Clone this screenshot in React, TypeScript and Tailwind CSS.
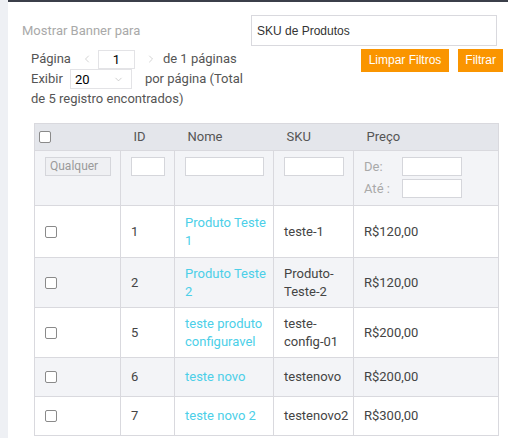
import { ChevronDown, ChevronLeft, ChevronRight } from 'lucide-react'

type Row = { id: string; nome: string; sku: string; preco: string; h: string; bg: string }

const rows: Row[] = [
  { id: '1', nome: 'Produto Teste 1', sku: 'teste-1', preco: 'R$120,00', h: 'h-[52px]', bg: 'bg-white' },
  { id: '2', nome: 'Produto Teste 2', sku: 'Produto-Teste-2', preco: 'R$120,00', h: 'h-[50px]', bg: 'bg-[#f3f4f7]' },
  { id: '5', nome: 'teste produto configuravel', sku: 'teste-config-01', preco: 'R$200,00', h: 'h-[50px]', bg: 'bg-white' },
  { id: '6', nome: 'teste novo', sku: 'testenovo', preco: 'R$200,00', h: 'h-[39px]', bg: 'bg-[#f3f4f7]' },
  { id: '7', nome: 'teste novo 2', sku: 'testenovo2', preco: 'R$300,00', h: 'h-[39px]', bg: 'bg-white' },
]

function Box() {
  return <span className="block w-[12px] h-[12px] rounded-[2px] border border-[#8a8a8a] bg-white" />
}

function FilterInput({ w }: { w: string }) {
  return <div className={`${w} h-[19px] border border-[#d5d6db] bg-white`} />
}

export default function App() {
  return (
    <div className="flex min-h-screen bg-[#eef0f4] font-['Roboto',sans-serif] text-[13px] text-[#555]">
      <div className="w-[8px] shrink-0 bg-[#eef0f4]" />
      <div className="flex-1 bg-white border-t-2 border-[#3b3f4a] pt-[13px]">
        <div className="flex">
          <div className="w-[243px] pl-[14px] pt-[6px] text-[#a9a9a9]">Mostrar Banner para</div>
          <div className="w-[246px] h-[31px] border border-[#d9d9de] flex items-center pl-[5px] font-['Liberation_Sans',Arial,sans-serif] text-[12px] text-[#333]">
            SKU de Produtos
          </div>
        </div>
        <div className="flex justify-between">
          <div className="ml-[23px] mt-[3px] w-[215px] leading-[20px]">
            <div className="flex items-center h-[20px]">
              <span>Página</span>
              <ChevronLeft className="w-[12px] h-[12px] ml-[10px] text-[#c4c4c4]" strokeWidth={1.5} />
              <div className="ml-[5px] w-[37px] h-[19px] border border-[#e3e3e6] flex items-center justify-center text-black leading-none">1</div>
              <ChevronRight className="w-[12px] h-[12px] ml-[10px] text-[#c4c4c4]" strokeWidth={1.5} />
              <span className="ml-[6px]">de 1 páginas</span>
            </div>
            <div className="flex items-center h-[20px]">
              <span>Exibir</span>
              <div className="ml-[7px] w-[62px] h-[20px] border border-[#e3e3e6] flex items-center justify-between pl-[4px] pr-[7px] text-black leading-none">
                <span>20</span>
                <ChevronDown className="w-[11px] h-[11px] text-[#bbb]" strokeWidth={1.5} />
              </div>
              <span className="ml-[13px] whitespace-nowrap">por página (Total</span>
            </div>
            <div>de 5 registro encontrados)</div>
          </div>
          <div className="flex gap-[9px] mt-[3px] mr-[5px] h-[23px] font-['Liberation_Sans',Arial,sans-serif] text-[12px] text-white">
            <button className="bg-[#fa9500] px-[8px] leading-[23px]">Limpar Filtros</button>
            <button className="bg-[#fa9500] px-[7px] leading-[23px]">Filtrar</button>
          </div>
        </div>
        <table className="ml-[26px] mt-[14px] w-[464px] table-fixed border-collapse border border-[#d9d9de] bg-white">
          <colgroup>
            <col className="w-[86px]" />
            <col className="w-[54px]" />
            <col className="w-[99px]" />
            <col className="w-[80px]" />
            <col className="w-[145px]" />
          </colgroup>
          <thead>
            <tr className="h-[27px] bg-[#e4e6eb] text-left">
              <th className="pl-[4px] font-normal"><Box /></th>
              <th className="pl-[13px] font-normal">ID</th>
              <th className="pl-[13px] font-normal">Nome</th>
              <th className="pl-[13px] font-normal">SKU</th>
              <th className="pl-[13px] font-normal">Preço</th>
            </tr>
          </thead>
          <tbody>
            <tr className="h-[55px] bg-[#f3f4f7] align-top">
              <td className="border border-[#d9d9de] pl-[10px] pt-[6px]">
                <div className="w-[66px] h-[19px] border border-[#d5d6db] bg-[#eff0f3] text-[12px] text-[#9a9a9a] pl-[4px] leading-[17px]">Qualquer</div>
              </td>
              <td className="border border-[#d9d9de] pl-[10px] pt-[6px]"><FilterInput w="w-[34px]" /></td>
              <td className="border border-[#d9d9de] pl-[10px] pt-[6px]"><FilterInput w="w-[79px]" /></td>
              <td className="border border-[#d9d9de] pl-[10px] pt-[6px]"><FilterInput w="w-[60px]" /></td>
              <td className="border border-[#d9d9de] pl-[10px] pt-[6px] text-[#a9a9a9]">
                <div className="flex items-center h-[19px]">
                  <span className="w-[38px]">De:</span>
                  <FilterInput w="w-[60px]" />
                </div>
                <div className="flex items-center h-[19px] mt-[3px]">
                  <span className="w-[38px]">Até :</span>
                  <FilterInput w="w-[60px]" />
                </div>
              </td>
            </tr>
            {rows.map((r) => (
              <tr key={r.id} className={`${r.h} ${r.bg} leading-[18px]`}>
                <td className="border border-[#d9d9de] pl-[10px]"><Box /></td>
                <td className="border border-[#d9d9de] pl-[10px] text-[#444]">{r.id}</td>
                <td className="border border-[#d9d9de] pl-[10px] pr-[1px] text-[#4ccfe8]">{r.nome}</td>
                <td className="border border-[#d9d9de] pl-[10px] pr-[6px] text-[#444]">{r.sku}</td>
                <td className="border border-[#d9d9de] pl-[10px] text-[#444]">{r.preco}</td>
              </tr>
            ))}
          </tbody>
        </table>
      </div>
    </div>
  )
}
